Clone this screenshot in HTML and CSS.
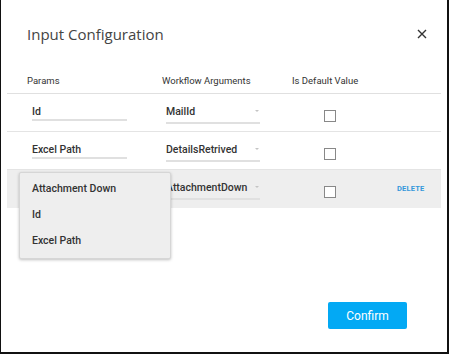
FILE: index.html
```html
<!DOCTYPE html>
<html>
<head>
  <title>Input Configuration</title>
  <link rel="stylesheet" href="styles.css">
</head>
<body>
  <div class="frame">
    <div class="dialog-head">
      <h1 class="dialog-title">Input Configuration</h1>
      <span class="close-btn">
        <svg width="10" height="10" viewBox="0 0 10 10">
          <path d="M1 1 L9 9 M9 1 L1 9" stroke="#333" stroke-width="1.4" fill="none"/>
        </svg>
      </span>
    </div>

    <div class="config-table">
      <div class="config-row head-row">
        <div>Params</div>
        <div>Workflow Arguments</div>
        <div>Is Default Value</div>
        <div></div>
      </div>

      <div class="config-row">
        <div><div class="param-input">Id</div></div>
        <div><div class="arg-select"><span>MailId</span><span class="caret"></span></div></div>
        <div><span class="check-box"></span></div>
        <div></div>
      </div>

      <div class="config-row">
        <div><div class="param-input">Excel Path</div></div>
        <div><div class="arg-select"><span>DetailsRetrived</span><span class="caret"></span></div></div>
        <div><span class="check-box"></span></div>
        <div></div>
      </div>

      <div class="config-row active-row">
        <div><div class="param-input">Attachment Down</div></div>
        <div><div class="arg-select"><span>AttachmentDown</span><span class="caret"></span></div></div>
        <div><span class="check-box"></span></div>
        <div><span class="delete-link">DELETE</span></div>

        <ul class="param-menu">
          <li>Attachment Down</li>
          <li>Id</li>
          <li>Excel Path</li>
        </ul>
      </div>
    </div>

    <div class="dialog-foot">
      <button class="confirm-btn">Confirm</button>
    </div>
  </div>
</body>
</html>
```

FILE: styles.css
```css
body {
  margin: 0;
  font-family: Roboto, "Liberation Sans", sans-serif;
  color: #333;
  background: #fff;
}
.frame {
  width: 449px;
  height: 354px;
  box-sizing: border-box;
  border-left: 1px solid #111;
  border-right: 2px solid #111;
  border-bottom: 2px solid #111;
}
.dialog-head {
  display: flex;
  justify-content: space-between;
  align-items: flex-start;
  padding: 24px 20px 0 26px;
}
.dialog-title {
  margin: 0;
  font-family: "Open Sans", sans-serif;
  font-weight: 400;
  font-size: 15px;
  line-height: 20px;
  color: #444;
}
.close-btn {
  display: block;
  margin-top: 5px;
  width: 10px;
  height: 10px;
}
.close-btn svg {
  display: block;
}
.config-table {
  margin: 30px 0 0 6px;
  width: 434px;
}
.config-row {
  position: relative;
  display: grid;
  grid-template-columns: 135px 130px 90px 1fr;
  padding: 11px 0 0 20px;
  height: 37px;
  box-sizing: border-box;
  border-bottom: 1px solid #e4e4e4;
  font-size: 10.5px;
  font-weight: 500;
}
.config-row.head-row {
  height: auto;
  padding: 0 0 5px 20px;
  font-size: 9.5px;
  font-weight: 400;
  line-height: 14px;
  border-bottom: 1px solid #e0e0e0;
}
.config-row:not(.head-row) {
  height: 38px;
}
.active-row {
  background: #eeeeee;
  border-bottom: none;
}
.param-input {
  margin-left: 5px;
  width: 95px;
  line-height: 14px;
  border-bottom: 2px solid #e0e0e0;
  white-space: nowrap;
  overflow: hidden;
}
.arg-select {
  display: flex;
  justify-content: space-between;
  align-items: flex-start;
  margin-left: 4px;
  width: 94px;
  line-height: 14px;
  padding-bottom: 3px;
  border-bottom: 2px solid #e0e0e0;
  white-space: nowrap;
}
.caret {
  margin: 5px 1px 0 0;
  width: 0;
  height: 0;
  border-left: 2.5px solid transparent;
  border-right: 2.5px solid transparent;
  border-top: 2.5px solid #c4c4c4;
}
.check-box {
  display: block;
  margin: 5px 0 0 32px;
  width: 12px;
  height: 12px;
  box-sizing: border-box;
  border: 1px solid #888;
  background: #fff;
}
.delete-link {
  display: block;
  margin: 3px 0 0 15px;
  font-size: 7.5px;
  font-weight: 700;
  line-height: 10px;
  color: #3498db;
  letter-spacing: 0.2px;
}
.param-menu {
  position: absolute;
  top: 2px;
  left: 12px;
  width: 152px;
  box-sizing: border-box;
  margin: 0;
  padding: 3px 0 4px 12px;
  list-style: none;
  background: #eeeeee;
  border: 1px solid #d6d6d6;
  border-radius: 2px;
  box-shadow: 0 1px 3px rgba(0, 0, 0, 0.25);
}
.param-menu li {
  line-height: 26px;
  font-size: 10.5px;
  font-weight: 500;
}
.dialog-foot {
  display: flex;
  justify-content: flex-end;
  padding-right: 40px;
  margin-top: 94px;
}
.confirm-btn {
  width: 79px;
  height: 27px;
  border: none;
  border-radius: 2px;
  background: #03a9f4;
  color: #fff;
  font-family: Roboto, sans-serif;
  font-size: 12px;
}
```
